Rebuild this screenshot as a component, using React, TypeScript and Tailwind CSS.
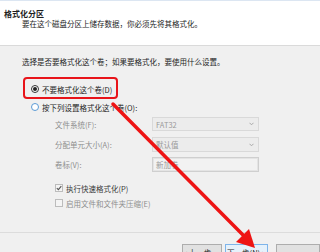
import React from 'react';

const font = { fontFamily: '"Noto Sans CJK SC", "Noto Sans", sans-serif' };

function Radio({ checked }: { checked?: boolean }) {
  return (
    <span
      className={
        'flex h-[8px] w-[8px] items-center justify-center rounded-full border bg-white ' +
        (checked ? 'border-[#333]' : 'border-[#5b9bd5]')
      }
    >
      {checked && <span className="h-[4px] w-[4px] rounded-full bg-[#222]" />}
    </span>
  );
}

function Check({ checked }: { checked?: boolean }) {
  return (
    <span className="flex h-[8px] w-[8px] items-center justify-center border border-[#bcbcbc] bg-[#f4f4f4]">
      {checked && (
        <svg width="6" height="6" viewBox="0 0 6 6">
          <path d="M0.8 3.1 L2.4 4.7 L5.3 1.2" fill="none" stroke="#555" strokeWidth="1.1" />
        </svg>
      )}
    </span>
  );
}

function Select({ value, h }: { value: string; h: string }) {
  return (
    <div className={'flex w-[107px] items-center justify-between border border-[#d9d9d9] bg-[#ececec] pl-[3px] pr-[4px] ' + h}>
      <span className="text-[#9a9a9a]">{value}</span>
      <svg width="5" height="4" viewBox="0 0 5 4">
        <path d="M0.5 0.8 L2.5 2.8 L4.5 0.8" fill="none" stroke="#a0a0a0" strokeWidth="0.9" />
      </svg>
    </div>
  );
}

export default function App() {
  return (
    <div className="relative h-[252px] w-[320px] overflow-hidden bg-[#f0f0f0] text-[7.5px] leading-[9px] text-[#1e1e1e]" style={font}>
      {/* Header */}
      <div className="h-[46px] border-t border-b border-t-[#dce6f2] border-b-[#dadada] bg-white">
        <div className="pl-[4px] pt-[8px] text-[8px] font-bold">格式化分区</div>
        <div className="pl-[22px] pt-[1px]">要在这个磁盘分区上储存数据，你必须先将其格式化。</div>
      </div>

      {/* Body */}
      <div className="pl-[22px] pt-[11px]">
        <div className="h-[9px]">选择是否要格式化这个卷；如果要格式化，要使用什么设置。</div>

        <div className="mt-[16px] flex h-[14px] items-center gap-[3px] pl-[9px]">
          <Radio checked />
          <span>不要格式化这个卷(D)</span>
        </div>
        <div className="mt-[4px] flex h-[14px] items-center gap-[3px] pl-[9px]">
          <Radio />
          <span>按下列设置格式化这个卷(O):</span>
        </div>

        <div className="pl-[33px] text-[#8e8e8e]">
          <div className="mt-[3px] flex items-center">
            <span className="w-[97px]">文件系统(F):</span>
            <Select value="FAT32" h="h-[14px]" />
          </div>
          <div className="mt-[6px] flex items-center">
            <span className="w-[97px]">分配单元大小(A):</span>
            <Select value="默认值" h="h-[15px]" />
          </div>
          <div className="mt-[5px] flex items-center">
            <span className="w-[97px]">卷标(V):</span>
            <div className="flex h-[15px] w-[107px] items-center border border-[#cfcfcf] bg-[#f2f2f2] pl-[3px] text-[#9a9a9a] shadow-[inset_0_0_0_1px_#e4e4e4]">
              新加卷
            </div>
          </div>
          <div className="mt-[10px] flex h-[12px] items-center gap-[3px] text-[#3a3a3a]">
            <Check checked />
            <span>执行快速格式化(P)</span>
          </div>
          <div className="mt-[3px] flex h-[12px] items-center gap-[3px]">
            <Check />
            <span>启用文件和文件夹压缩(E)</span>
          </div>
        </div>
      </div>

      {/* Footer */}
      <div className="mt-[23px] border-t border-[#dcdcdc] pt-[11px]">
        <div className="flex pl-[182px]">
          <div className="flex h-[22px] w-[50px] justify-center border border-[#adadad] bg-[#e1e1e1] pt-[3px]">&lt; 上一步(B)</div>
          <div className="ml-[3px] flex h-[22px] w-[55px] justify-center border border-[#7eb4ea] bg-[#e5f1fb] pt-[3px]">下一步(N) &gt;</div>
          <div className="ml-[8px] h-[22px] w-[55px] border border-[#adadad] bg-[#e1e1e1]" />
        </div>
      </div>

      {/* Annotation: red box */}
      <div className="absolute left-[23px] top-[77px] h-[22px] w-[95px] rounded-[4px] border-[2.5px] border-[#e8141a]" />

      {/* Annotation: red arrow */}
      <svg className="absolute left-0 top-0" width="320" height="252" viewBox="0 0 320 252">
        <line x1="113" y1="104" x2="246" y2="238" stroke="#ee1414" strokeWidth="3.5" strokeLinecap="round" />
        <polygon points="255,248 236,242 249,229" fill="#ee1414" />
      </svg>
    </div>
  );
}
